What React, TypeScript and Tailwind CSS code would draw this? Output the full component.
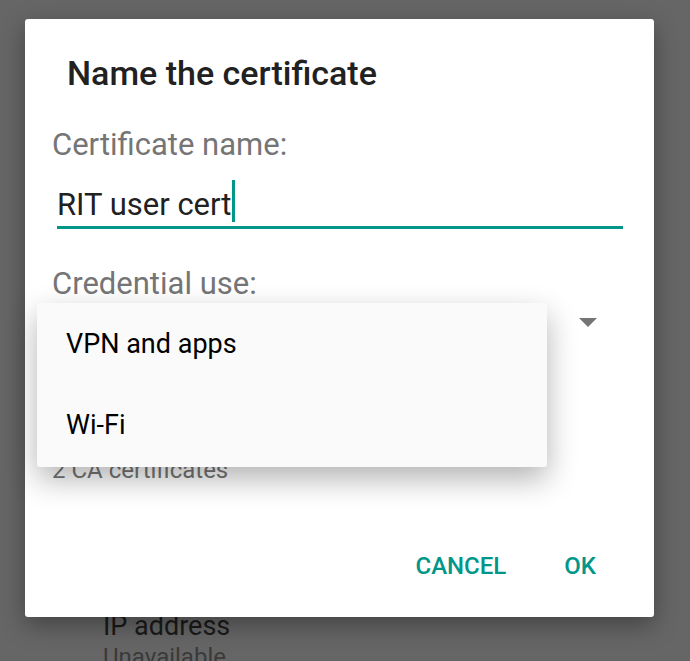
export default function App() {
  return (
    <div
      className="h-[661px] w-[690px] overflow-hidden bg-[#666666] pt-[19px]"
      style={{ fontFamily: 'Roboto, "Liberation Sans", sans-serif' }}
    >
      {/* dialog */}
      <div className="relative mx-[25px] h-[598px] w-[629px] rounded-[3px] bg-white shadow-[0_8px_24px_rgba(0,0,0,0.35)]">
        <div className="px-[42px] pt-[34px] text-[34px] font-medium leading-[40px] text-[#212121]">
          Name the certificate
        </div>

        <div className="px-[27px] pt-[34px]">
          <div className="text-[31px] leading-[36px] text-[#757575]">Certificate name:</div>

          <div className="mt-[17px] ml-[5px] mr-[4px] flex h-[49px] items-end border-b-[3px] border-[#009688]">
            <span className="pb-[3px] text-[31px] leading-[36px] text-[#212121]">RIT user cert</span>
            <span className="mb-[4px] ml-[1px] h-[42px] w-[3px] bg-[#009688]" />
          </div>

          <div className="mt-[37px] text-[31px] leading-[36px] text-[#757575]">Credential use:</div>

          <div className="flex h-[42px] items-center justify-end pr-[30px]">
            <svg width="18" height="10" viewBox="0 0 18 10">
              <path d="M0 0 L18 0 L9 9 Z" fill="#757575" />
            </svg>
          </div>

          <div className="mt-[112px] text-[24px] leading-[28px] text-[#757575]">2 CA certificates</div>
        </div>

        <div className="mt-[68px] flex justify-end gap-[58px] pr-[58px] text-[24px] font-medium leading-[28px] text-[#009688]">
          <button>CANCEL</button>
          <button>OK</button>
        </div>

        {/* open dropdown menu */}
        <div className="absolute left-[12px] top-[284px] w-[510px] rounded-[3px] bg-[#fafafa] py-[1px] shadow-[0_12px_30px_rgba(0,0,0,0.3)]">
          <div className="flex h-[81px] items-center px-[29px] text-[27px] text-black">VPN and apps</div>
          <div className="flex h-[81px] items-center px-[29px] text-[27px] text-black">Wi-Fi</div>
        </div>
      </div>

      {/* page behind the dialog */}
      <div className="pl-[103px]">
        <div className="text-[27px] leading-[18px] text-[#1a1a1a]">IP address</div>
        <div className="mt-[8px] text-[24px] leading-[28px] text-[#3a3a3a]">Unavailable</div>
      </div>
    </div>
  )
}
